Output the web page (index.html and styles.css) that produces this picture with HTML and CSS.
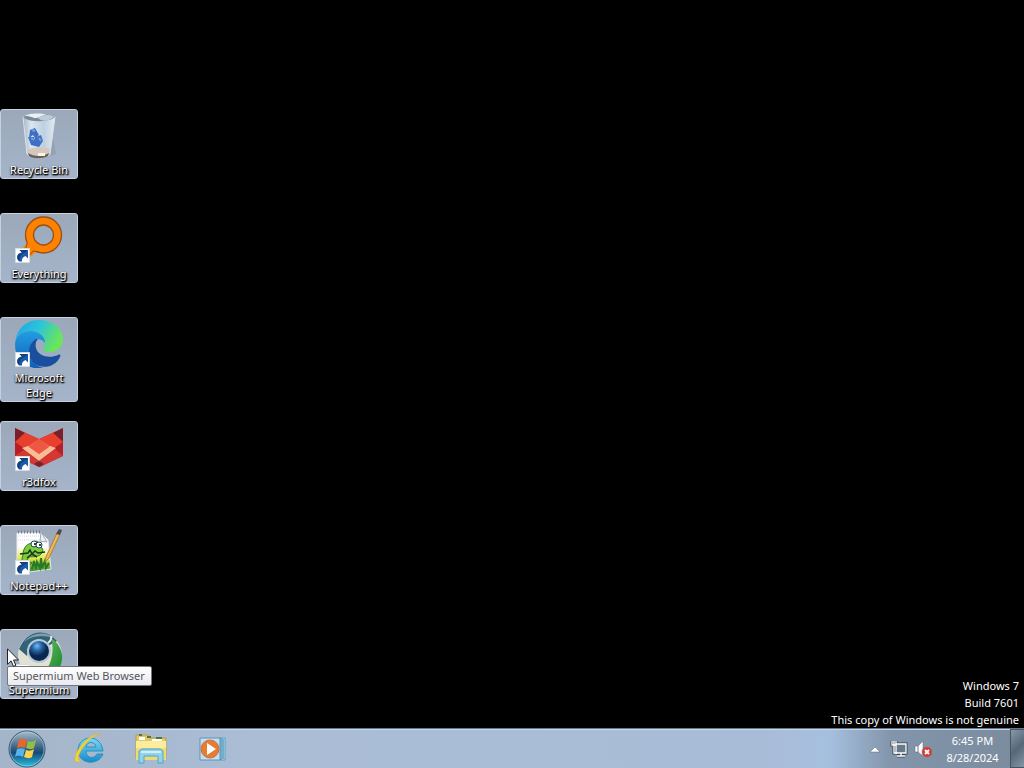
FILE: index.html
```
<!DOCTYPE html>
<html lang="en">
<head>
  <meta charset="UTF-8">
  <meta name="viewport" content="width=device-width, initial-scale=1.0">
  <title>Desktop</title>
  <link rel="stylesheet" href="styles.css">
</head>
<body>
  <!-- Shared shortcut arrow -->
  <svg class="defs" width="0" height="0" aria-hidden="true">
    <symbol id="shortcut" viewBox="0 0 15 15">
      <path fill="#fff" stroke="#d3dbe4" d="M.5.5h14v14H.5z"/>
      <path fill="#1c5aa5" d="M4.500 2H13v8.500L10.500 8C8 9 6.500 11 7 13.500H4.500C2 10 4 6 7 4.500z"/>
      <path fill="#123f80" d="M2 9c.2-2.500 2-4.200 5-4.500L4.500 2H13l-3 2.500C6 6 4.500 8 4.500 13.500 3 12.500 2 11 2 9z"/>
    </symbol>
  </svg>

  <main class="desktop">
    <div class="icon-grid">
      <button class="icon">
        <svg class="icon-img" viewBox="0 0 48 48">
          <defs>
            <linearGradient id="glass"><stop stop-color="#a3b5c4"/><stop offset=".25" stop-color="#dbe6f0"/><stop offset=".65" stop-color="#bdd0e2"/><stop offset="1" stop-color="#e4ebf0"/></linearGradient>
          </defs>
          <path d="M38 27l3 14-3 3-4-2z" fill="#7f91a6" opacity=".4"/>
          <path d="M8 5l4 37c5 5 18 5 23 0l5-37z" fill="url(#glass)" stroke="#d8e3eb"/>
          <path d="M8 5c8-4 25-4 32 0l-3 2c-7 3-20 3-26 0z" fill="#788b9a"/>
          <path d="M10 4c4-3 18-3 21-1-5 0-6 3-10 3-4 0-5-2-11-2z" fill="#e8f0f2"/>
          <path d="M23 6c5-4 12-4 16-1l-5 3c-5 2-9 0-11-2z" fill="#bdcbd6"/>
          <path d="M12 38c6-3 17-3 23-1l-1 6c-5 3-16 3-21-1z" fill="#d5c7bc"/>
          <path d="M13 41c6 4 15 4 21 0l-1 3c-5 3-15 3-19 0z" fill="#665e5b"/>
          <path d="M23 41h7v3h-7z" fill="#fff2df"/>
          <path d="M15 18l5-2 4 7-4 3-2-3-4 3zM13 25l6 0 1 5 5 2-1 3-8-2zM21 25l5-2 2 6-4 6-2-3-4-3z" fill="#3f6fc2"/>
          <path d="M17 18l3 1M16 26l3 2M24 26l2 3" stroke="#75a0dd" stroke-width="2"/>
        </svg>
        <span class="icon-label">Recycle Bin</span>
      </button>

      <button class="icon">
        <svg class="icon-img" viewBox="0 0 48 48">
          <path fill="#ff8100" stroke="#96501a" stroke-width="1.300" fill-rule="evenodd" d="M28.500 1a18 18 0 1 0 0 36 18 18 0 1 0 0-36zm0 8a10 10 0 1 1 0 20 10 10 0 1 1 0-20z"/>
          <path fill="#ff8100" d="M13 26L2 39l7 7 13-11z"/>
          <path d="M12.300 26.500L11 32l-8 8M24 36l-6-1-8 10" fill="none" stroke="#96501a"/>
          <use href="#shortcut" x="0" y="32" width="15" height="15"/>
        </svg>
        <span class="icon-label">Everything</span>
      </button>

      <button class="icon">
        <svg class="icon-img" viewBox="0 0 48 48">
          <defs>
            <linearGradient id="edgeTop" y2=".4"><stop stop-color="#1fa2e4"/><stop offset=".5" stop-color="#2cc3dc"/><stop offset="1" stop-color="#6ae65a"/></linearGradient>
            <linearGradient id="edgeLeft" x2="0" y2="1"><stop stop-color="#239de1"/><stop offset="1" stop-color="#115fb8"/></linearGradient>
          </defs>
          <path fill="url(#edgeTop)" d="M0 21C3 7 12 0 24 0c14 0 24 9 24 19 0 8-6 13-13 13-5 0-8-1-7-3 2-2 2-3 2-5 0-7-6-13-15-13C8 11 2 15 0 21z"/>
          <path fill="url(#edgeLeft)" d="M0 25c0-9 7-14 15-14 9 0 15 5 15 12-2-3-5-4-8-4-6 2-9 11-6 18 2 6 7 10 13 11-16 3-29-8-29-23z"/>
          <path fill="#194f9e" d="M21 19c-7 4-10 15-3 23 7 8 22 6 27-5 1-2 0-3-2-2-9 4-20 1-22-7-1-4 0-7 2-9z"/>
          <use href="#shortcut" x="0" y="32" width="15" height="15"/>
        </svg>
        <span class="icon-label">Microsoft Edge</span>
      </button>

      <button class="icon">
        <svg class="icon-img" viewBox="0 0 48 48">
          <path fill="#d82c27" d="M0 4l24 11L48 4v28L25 43 0 32z"/>
          <path fill="#7b2029" d="M0 4l10 5-10 9zM48 4l-10 5 10 9z"/>
          <path fill="#e8402f" d="M10 9l14 6-14 10-10-7zM38 9l-14 6 14 10 10-7z"/>
          <path fill="#b91d25" d="M0 18l10 7-10 7zM48 18l-10 7 10 7z"/>
          <path fill="#f17159" d="M24 15l15 10-15 11L9 25z"/>
          <path fill="#f9bd96" d="M7 24l6-2 11 8 11-8 6 2-17 13z"/>
          <path fill="#ed5743" d="M24 15l10 8-10 7-10-7z"/>
          <path fill="#d33833" d="M0 32l9-6 15 11v6zM48 32l-8-7-16 12v6z"/>
          <path fill="#742331" d="M24 37l5 3-5 3-5-3z"/>
          <use href="#shortcut" x="0" y="32" width="15" height="15"/>
        </svg>
        <span class="icon-label">r3dfox</span>
      </button>

      <button class="icon">
        <svg class="icon-img" viewBox="0 0 48 48">
          <defs><linearGradient id="page" x2="0" y2="1"><stop offset=".35" stop-color="#fff"/><stop offset=".65" stop-color="#e1e84b"/><stop offset="1" stop-color="#278927"/></linearGradient></defs>
          <path fill="url(#page)" stroke="#e7eaf0" d="M2 5h24l7 7 3 29-22 3-12-2z"/>
          <path fill="#edf0f4" stroke="#a1a7b2" d="M26 4l-1 9 7 1z"/>
          <path d="M3 4h23" stroke="#737a86" stroke-width="3" stroke-dasharray="1 2"/>
          <path d="M3 8h21M3 12h21" stroke="#d4d9e5" stroke-dasharray="1 1"/>
          <path fill="#7dcc38" stroke="#337329" d="M8 27c0-8 5-12 10-12 3-4 7-1 6 3 5 2 5 6 1 9-7 4-10-1-13 5l5 3-4 3c-6-3-7-6-5-11z"/>
          <circle cx="19" cy="16" r="3" fill="#fff" stroke="#17455b"/><circle cx="24" cy="17" r="3" fill="#fff" stroke="#17455b"/>
          <circle cx="20" cy="16" r="1"/><circle cx="25" cy="17" r="1"/>
          <path d="M5 26l8-1 2-3 2 4 3-3 3 2 7-1M12 30l5-4 5 3" fill="none" stroke="#193622" stroke-width="1.500"/>
          <path d="M17 41l2-8 2 8 1-7 3 6 1-10 1 10 3-7 1 7 3-5" fill="none" stroke="#277827" stroke-width="2"/>
          <path d="M31 29l11-24 3 1-11 24-4 4z" fill="#f1b953" stroke="#ac813a"/>
          <path d="M41 6l3-5 3 1-2 5z" fill="#484a54"/>
          <use href="#shortcut" x="0" y="32" width="15" height="15"/>
        </svg>
        <span class="icon-label">Notepad++</span>
      </button>

      <button class="icon" aria-describedby="tip">
        <svg class="icon-img" viewBox="0 0 48 48">
          <defs>
            <radialGradient id="ball" cx=".4" cy=".25"><stop stop-color="#78bbef"/><stop offset=".45" stop-color="#2a6aae"/><stop offset="1" stop-color="#0a2750"/></radialGradient>
            <linearGradient id="leaf" x2="1" y2="1"><stop stop-color="#78b86c"/><stop offset="1" stop-color="#0d8a28"/></linearGradient>
          </defs>
          <circle cx="25" cy="23" r="22" fill="#e1e1d4"/>
          <path fill="#336278" d="M4 17C12-3 32-4 42 9l-9 5c-9-6-20-1-21 10z"/>
          <path fill="#7aa1ac" d="M9 10C17 0 31-1 39 6 26 2 16 4 9 10z"/>
          <path fill="url(#leaf)" d="M36 6c14 9 15 27 2 37H27c9-8 13-24 9-37z"/>
          <circle cx="24" cy="19" r="12" fill="#b5cad6"/>
          <circle cx="24" cy="19" r="10" fill="url(#ball)"/>
          <path d="M33 11c4-3 3-7 3-7" fill="none" stroke="#dfebe9" stroke-width="2"/>
          <use href="#shortcut" x="0" y="32" width="15" height="15"/>
        </svg>
        <span class="icon-label">Supermium</span>
        <span class="tooltip" id="tip" role="tooltip">Supermium Web Browser</span>
        <svg class="cursor" viewBox="0 0 12 19"><path fill="#fff" stroke="#222" d="M.5.800v15.500l3.600-3.400 2.400 5.500 2.400-1-2.400-5.400h5z"/></svg>
      </button>
    </div>

    <div class="watermark">
      <div>Windows 7</div>
      <div>Build 7601</div>
      <div>This copy of Windows is not genuine</div>
    </div>
  </main>

  <footer class="taskbar">
    <button class="start" aria-label="Start">
      <svg viewBox="0 0 38 38">
        <defs>
          <linearGradient id="orb" x2="0" y2="1"><stop stop-color="#a9bdcb"/><stop offset=".45" stop-color="#3c6584"/><stop offset=".6" stop-color="#164a75"/><stop offset="1" stop-color="#2bc4e6"/></linearGradient>
        </defs>
        <circle cx="19" cy="19" r="18" fill="url(#orb)" stroke="#36566f"/>
        <circle cx="19" cy="19" r="17" fill="none" stroke="#b8d6e6" opacity=".6"/>
        <path fill="#e5672f" d="M11 10c3-2 5-1 8 0l-2 8c-3-1-5-1-8 0z"/>
        <path fill="#91bf43" d="M20 11c3 1 5 1 8-1l-2 8c-3 2-5 1-8 0z"/>
        <path fill="#58b5e9" d="M9 19c3-1 5-1 8 0l-2 8c-3-1-5-2-8 0z"/>
        <path fill="#ffd34f" d="M18 20c3 1 5 1 8-1l-2 8c-3 2-5 1-8 0z"/>
      </svg>
    </button>
    <nav class="pins">
      <button class="pin" aria-label="Internet Explorer">
        <svg viewBox="0 0 34 32">
          <defs><linearGradient id="ie" x2="0" y2="1"><stop stop-color="#78d9f6"/><stop offset="1" stop-color="#168ac8"/></linearGradient></defs>
          <path fill="url(#ie)" stroke="#2a91bd" fill-rule="evenodd" d="M30 18H13c0 8 9 8 11 3h6C26 33 5 32 5 17 5 2 28 0 30 18zm-17-4h10c-1-6-9-6-10 0z"/>
          <path fill="#f5d235" stroke="#d0b03a" stroke-width=".5" d="M28 1C17-1 1 18 2 27c1 3 4 2 6 1-5 0-2-9 4-16 5-7 12-11 16-11z"/>
        </svg>
      </button>
      <button class="pin" aria-label="Windows Explorer">
        <svg viewBox="0 0 34 32">
          <path fill="#e4c765" stroke="#b79d45" d="M2 6V2h12l2 3h16v21H2z"/>
          <path fill="#fff" d="M5 4h6v3H5zM18 6h10v3H18z"/><path d="M5 2h3M13 4h4M22 5h6" stroke="#4d7640" stroke-width="2"/>
          <path fill="#fbed9d" d="M2 8h30v19H2z"/>
          <path fill="#eadd78" d="M2 15h30v12H2z"/>
          <path fill="#91d3ed" stroke="#51a2c9" d="M5 30V18l3-2h18l3 2v12h-5v-7H10v7z"/>
          <path fill="#d3edf5" d="M7 18h20v2H7z"/>
        </svg>
      </button>
      <button class="pin" aria-label="Windows Media Player">
        <svg viewBox="0 0 34 32">
          <path fill="#b8dff0" stroke="#5c9fc4" d="M24 5h6v22h-6z"/><path d="M26 5v22M28 6v20" stroke="#347ba6"/>
          <path fill="#c3dff0" stroke="#5b94b9" d="M5 5h20v22H5z"/>
          <circle cx="15" cy="16" r="9" fill="#e77d32" stroke="#c5714a"/>
          <path fill="#fff" d="M12 10l9 6-9 6z"/>
        </svg>
      </button>
    </nav>
    <div class="tray">
      <button class="tray-btn" aria-label="Show hidden icons"><svg viewBox="0 0 18 18"><path fill="#fff" stroke="#59697c" stroke-width=".5" d="M4 12l5-5 5 5z"/></svg></button>
      <button class="tray-btn" aria-label="Network">
        <svg viewBox="0 0 18 18">
          <path fill="none" stroke="#35424f" stroke-width="3" d="M6 4h10v9H6zM7 16h8M2 1v4h4V1M4 5v8h3"/>
          <path fill="#687988" stroke="#fff" stroke-width="1.300" d="M6 4h10v9H6z"/>
          <path d="M7 16h8M11 13v3M2 1v4h4V1M4 1v4M4 5v8h3" fill="none" stroke="#fff" stroke-width="1.300"/>
        </svg>
      </button>
      <button class="tray-btn" aria-label="Volume muted">
        <svg viewBox="0 0 18 18">
          <path fill="#fff" stroke="#566474" stroke-width=".5" d="M1 6h3l5-5v15l-5-4H1z"/><path d="M4 6v6" stroke="#697786"/>
          <circle cx="13" cy="12" r="5" fill="#d23d38" stroke="#b2545c" stroke-width=".5"/><path d="M11 10l4 4m0-4l-4 4" stroke="#fff" stroke-width="1.800"/>
        </svg>
      </button>
      <button class="clock"><span>6:45 PM</span><span>8/28/2024</span></button>
      <button class="show-desktop" aria-label="Show desktop"></button>
    </div>
  </footer>
</body>
</html>
```

FILE: styles.css
```
* {
  box-sizing: border-box;
}

body {
  margin: 0;
  height: 100vh;
  display: flex;
  flex-direction: column;
  overflow: hidden;
  background: #000;
  font-family: "Noto Sans", "Open Sans", sans-serif;
  font-size: 11px;
  color: #fff;
}

button {
  margin: 0;
  padding: 0;
  border: 0;
  background: none;
  font: inherit;
  color: inherit;
}

svg {
  display: block;
}

.defs {
  position: absolute;
}

/* Desktop */
.desktop {
  position: relative;
  flex: 1;
  min-height: 0;
}

.icon-grid {
  display: grid;
  grid-auto-rows: 104px;
  justify-items: start;
  align-items: start;
  padding-top: 109px;
}

.icon {
  position: relative;
  display: flex;
  flex-direction: column;
  align-items: center;
  gap: 2px;
  width: 78px;
  padding: 2px 1px 1px;
  border: 1px solid #c3d1e1;
  border-radius: 3px;
  background: linear-gradient(#9ba8b9, #a5b4ca);
}

.icon-img {
  width: 48px;
  height: 48px;
}

.icon-label {
  line-height: 15px;
  text-align: center;
  text-shadow: 1px 1px 2px #000, 0 1px 2px #000, 1px 1px 1px #000;
}

.tooltip {
  position: absolute;
  top: 36px;
  left: 6px;
  padding: 0 6px 0 5px;
  border: 1px solid #767676;
  border-radius: 2px;
  background: linear-gradient(#fff, #e8e9f2);
  line-height: 18px;
  color: #575757;
  white-space: nowrap;
}

.cursor {
  position: absolute;
  top: 18px;
  left: 6px;
  width: 12px;
  height: 19px;
}

.watermark {
  position: absolute;
  right: 5px;
  bottom: 0;
  line-height: 17px;
  text-align: right;
}

/* Taskbar */
.taskbar {
  display: flex;
  align-items: stretch;
  height: 40px;
  border-top: 1px solid #66788b;
  box-shadow: inset 0 1px #c8d8e8;
  background: linear-gradient(90deg, #a5b5c9, #aabdd5 25%, #a9bcd7 75%, #a5c0df 81%, #8295aa 87%, #7b8b9e);
}

.start {
  display: flex;
  align-items: center;
  justify-content: center;
  width: 54px;
}

.start svg {
  width: 38px;
  height: 38px;
}

.pins {
  display: flex;
  gap: 1px;
  padding-left: 6px;
}

.pin {
  display: flex;
  align-items: center;
  justify-content: center;
  width: 60px;
}

.pin svg {
  width: 34px;
  height: 32px;
}

.tray {
  display: flex;
  align-items: stretch;
  margin-left: auto;
}

.tray-btn {
  display: flex;
  align-items: center;
  justify-content: center;
  width: 24px;
}

.tray-btn svg {
  width: 18px;
  height: 18px;
}

.clock {
  display: flex;
  flex-direction: column;
  justify-content: center;
  align-items: center;
  width: 75px;
  line-height: 17px;
}

.show-desktop {
  width: 14px;
  border: 1px solid #455463;
  border-right: 0;
  background: linear-gradient(135deg, #8a98a7, #56677a 50%, #8495a7);
}
```
